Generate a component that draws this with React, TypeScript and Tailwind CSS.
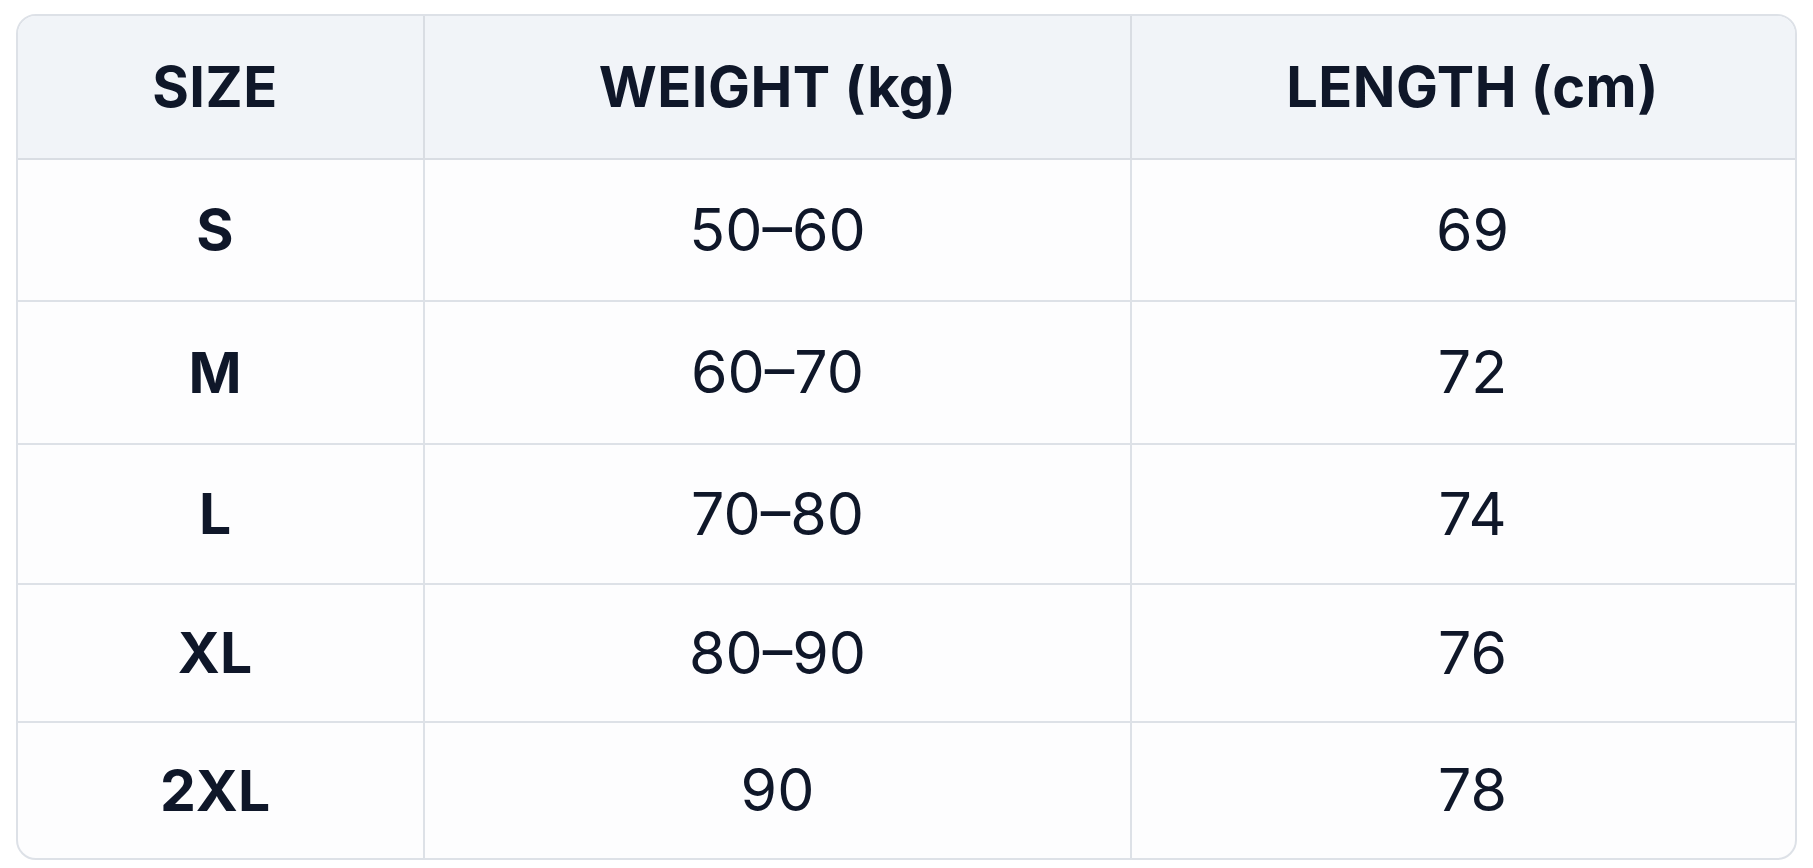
const rows = [
  { size: "S", weight: "50–60", length: "69" },
  { size: "M", weight: "60–70", length: "72" },
  { size: "L", weight: "70–80", length: "74" },
  { size: "XL", weight: "80–90", length: "76" },
  { size: "2XL", weight: "90", length: "78" },
];

const headers = ["SIZE", "WEIGHT (kg)", "LENGTH (cm)"];

// column-specific nudges so text sits where the reference has it
const colPad = ["pr-[11px]", "", "pl-[18px]"];

export default function App() {
  return (
    <div className="min-h-screen bg-white pl-[16px] pr-[16px] pt-[14px] pb-[8px] font-['Inter',sans-serif] text-[#0f1729]">
      <div className="grid h-[846px] grid-cols-[407px_707px_1fr] grid-rows-[144px_142px_143px_140px_138px_1fr] overflow-hidden rounded-[20px] border-2 border-[#dde1e7] bg-[#fdfdfe]">
        {headers.map((h, i) => (
          <div
            key={h}
            className={
              "flex items-center justify-center border-b-2 border-[#d9dde3] bg-[#f1f4f8] text-[56px] font-bold tracking-[0.5px] " +
              colPad[i] +
              (i < 2 ? " border-r-2" : "")
            }
          >
            {h}
          </div>
        ))}
        {rows.map((r, idx) => {
          const last = idx === rows.length - 1;
          const rowBorder = last ? "" : "border-b-2 ";
          return [
            <div
              key={r.size + "-s"}
              className={rowBorder + "flex items-center justify-center border-r-2 border-[#dde1e7] pr-[11px] text-[57px] font-bold"}
            >
              {r.size}
            </div>,
            <div
              key={r.size + "-w"}
              className={rowBorder + "flex items-center justify-center border-r-2 border-[#dde1e7] text-[59px] font-normal"}
            >
              {r.weight}
            </div>,
            <div
              key={r.size + "-l"}
              className={rowBorder + "flex items-center justify-center border-[#dde1e7] pl-[18px] text-[59px] font-normal"}
            >
              {r.length}
            </div>,
          ];
        })}
      </div>
    </div>
  );
}
